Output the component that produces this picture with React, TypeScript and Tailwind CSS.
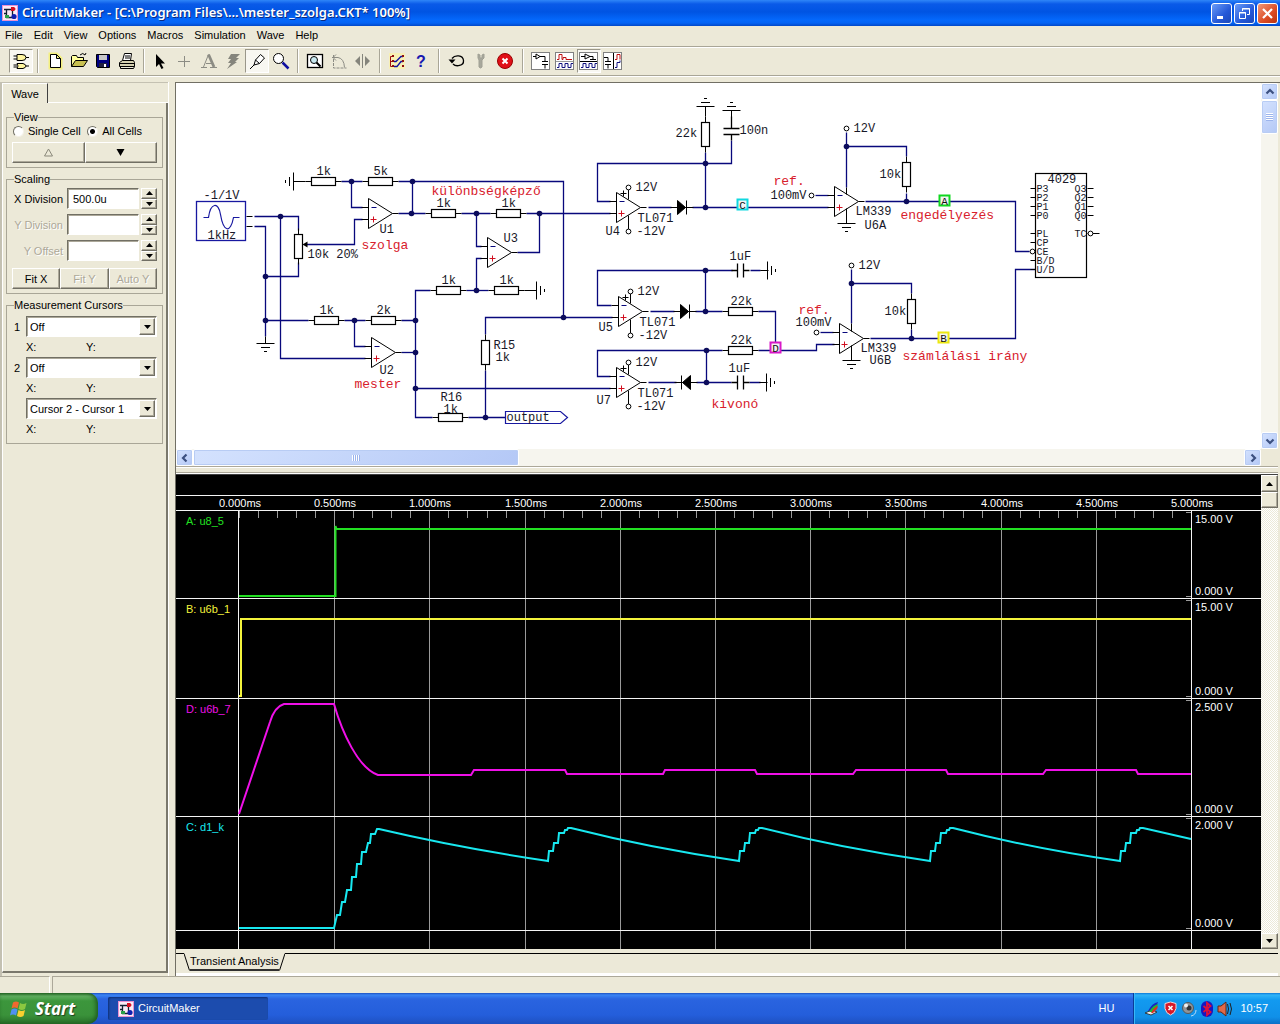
import React, { useState } from "react";

const NAVY = "#08087c";

/* ---------- schematic parts ---------- */

type Pt = { x: number; y: number };

function Wire({ d }: { d: string }) {
  return <path d={d} fill="none" stroke={NAVY} strokeWidth="1.3" />;
}

function Lead({ d }: { d: string }) {
  return <path d={d} fill="none" stroke="#000" strokeWidth="1" />;
}

function Dot({ x, y }: Pt) {
  return <circle cx={x} cy={y} r="2.8" fill="#0c0c5c" />;
}

function ResistorH({ x, y }: Pt) {
  return (
    <g fill="#fff" stroke="#000">
      <path d={`M${x - 6} ${y}h36`} />
      <rect x={x} y={y - 4} width="24" height="8" strokeWidth="1.2" />
    </g>
  );
}

function ResistorV({ x, y }: Pt) {
  return (
    <g fill="#fff" stroke="#000">
      <path d={`M${x} ${y - 6}v36`} />
      <rect x={x - 4} y={y} width="8" height="24" strokeWidth="1.2" />
    </g>
  );
}

function Terminal({ x, y }: Pt) {
  return <circle cx={x} cy={y} r="2.4" fill="#fff" stroke="#000" />;
}

function Ground({ x, y, dir }: Pt & { dir: "down" | "up" | "left" | "right" }) {
  const turn = { down: 0, left: 90, up: 180, right: 270 }[dir];
  return (
    <g transform={`translate(${x} ${y}) rotate(${turn})`} stroke="#000" strokeWidth="1">
      <path d="M-9 0H9M-4.500 4H4.500M-1.500 8H1.500M0 -7V0" />
    </g>
  );
}

function OpAmp({ x, y }: Pt) {
  return (
    <g>
      <path d={`M${x} ${y - 15}L${x + 24} ${y}L${x} ${y + 15}Z`} fill="#fff" stroke="#000" />
      <path d={`M${x - 7} ${y - 6}h7M${x - 7} ${y + 6}h7M${x + 24} ${y}h6`} stroke="#000" />
      <path d={`M${x + 3} ${y - 6}h5`} stroke={NAVY} />
      <path d={`M${x + 2} ${y + 6}h6M${x + 5} ${y + 3}v6`} stroke="#d01020" />
    </g>
  );
}

function Supply({ x, y }: Pt) {
  return (
    <g>
      <path d={`M${x + 12} ${y - 18}v10M${x + 12} ${y + 8}v14M${x + 4} ${y - 14}h6M${x + 7} ${y - 17}v6`} stroke="#000" />
      <Terminal x={x + 12} y={y - 20} />
      <Terminal x={x + 12} y={y + 24} />
      <Label x={x + 19} y={y - 17}>12V</Label>
      <Label x={x + 21} y={y + 14}>TL071</Label>
      <Label x={x + 20} y={y + 27}>-12V</Label>
    </g>
  );
}

function Diode({ x, y, flip }: Pt & { flip?: boolean }) {
  return (
    <g fill="#000" stroke="#000">
      <path d={flip ? `M${x + 9} ${y - 7}v14l-8 -7zM${x} ${y - 7}v14` : `M${x} ${y - 7}v14l8 -7zM${x + 9} ${y - 7}v14`} />
      <path d={`M${x - 7} ${y}h23`} />
    </g>
  );
}

function CapH({ x, y }: Pt) {
  return <path d={`M${x - 6} ${y}h6M${x} ${y - 7}v14M${x + 6} ${y - 7}v14M${x + 6} ${y}h6`} stroke="#000" strokeWidth="1.3" />;
}

function Label({ x, y, children }: Pt & { children: string }) {
  return (
    <text x={x} y={y} fontSize="12" fill="#181828">
      {children}
    </text>
  );
}

function Note({ x, y, children }: Pt & { children: string }) {
  return (
    <text x={x} y={y} fontSize="13" fill="#d8202c">
      {children}
    </text>
  );
}

function Probe({ x, y, name, color }: Pt & { name: string; color: string }) {
  return (
    <g>
      <rect x={x - 5} y={y - 5} width="10" height="10" fill="#f4f4f4" stroke={color} strokeWidth="2" />
      <text x={x} y={y + 4} fontSize="11" textAnchor="middle" fill="#111">
        {name}
      </text>
    </g>
  );
}

const resistorsH = [
  [311, 181], [368, 181], [314, 320], [371, 320], [431, 213], [496, 213], [436, 290],
  [494, 290], [438, 417], [728, 311], [728, 350],
];
const resistorsV = [[298, 234], [485, 340], [705, 122], [906, 162], [911, 299]];
const dots = [
  [280, 216], [265, 276], [265, 320], [351, 181], [412, 181], [411, 213], [354, 320], [415, 320],
  [415, 352], [415, 388], [476, 213], [539, 213], [476, 290], [563, 317], [485, 417], [705, 163],
  [705, 207], [705, 270], [705, 311], [706, 350], [706, 382], [846, 146], [906, 201], [851, 283], [911, 338],
];
const wires = [
  "M254 216H298V230", "M254 226H265V336", "M298 262V276H265", "M280 216V358H365", "M306 244H354V219H362",
  "M341 181H362M398 181H563V317", "M351 181V207H362", "M398 213H425M412 181V213", "M265 320H308",
  "M344 320H365M401 320H415", "M354 320V346H365", "M401 352H415", "M430 290H415V417H432", "M415 388H610",
  "M461 213H490M526 213H610", "M476 213V246H481", "M476 290V258H481", "M517 252H539V213", "M466 290H488",
  "M468 417H505", "M485 370V417M485 334V317H612", "M610 201H597V163H731V140", "M705 152V207",
  "M648 207H671M692 207H828", "M611 305H597V270H732", "M650 311H674M695 311H722M705 270V311",
  "M758 311H775V342", "M610 376H597V350H722", "M758 350H816V344H834", "M648 382H676M696 382H731M706 350V382",
  "M750 270H760M749 382H760", "M815 195H828", "M846 132V187M846 146H906V156", "M906 193V201M865 201H1015V251H1029",
  "M820 332H833", "M851 269V323M851 283H911V293", "M911 329V338M870 338H1015V269H1035",
];
const labels: [number, number, string][] = [
  [203, 198, "-1/1V"], [207, 238, "1kHz"], [316, 174, "1k"], [373, 174, "5k"], [379, 232, "U1"],
  [307, 257, "10k 20%"], [319, 313, "1k"], [376, 313, "2k"], [379, 373, "U2"], [436, 206, "1k"],
  [501, 206, "1k"], [503, 241, "U3"], [441, 283, "1k"], [499, 283, "1k"], [493, 348, "R15"],
  [495, 360, "1k"], [440, 400, "R16"], [443, 412, "1k"], [506, 420, "output"], [605, 234, "U4"],
  [598, 330, "U5"], [596, 403, "U7"], [675, 136, "22k"], [739, 133, "100n"], [729, 259, "1uF"],
  [730, 304, "22k"], [730, 343, "22k"], [728, 371, "1uF"], [770, 198, "100mV"], [853, 131, "12V"],
  [879, 177, "10k"], [855, 214, "LM339"], [864, 228, "U6A"], [795, 325, "100mV"], [858, 268, "12V"],
  [884, 314, "10k"], [860, 351, "LM339"], [869, 363, "U6B"], [1047, 182, "4029"],
];
const notes: [number, number, string][] = [
  [361, 248, "szolga"], [354, 387, "mester"], [431, 194, "különbségképző"], [711, 407, "kivonó"],
  [773, 184, "ref."], [798, 313, "ref."], [900, 218, "engedélyezés"], [902, 359, "számlálási irány"],
];
const leftPins: [number, string][] = [
  [188, "P3"], [197, "P2"], [206, "P1"], [215, "P0"], [233, "PL"], [242, "CP"], [251, "CE"], [260, "B/D"], [269, "U/D"],
];
const rightPins: [number, string][] = [[188, "Q3"], [197, "Q2"], [206, "Q1"], [215, "Q0"], [233, "TC"]];

function Schematic() {
  return (
    <svg width="1085" height="366" viewBox="175.5 82.5 1085 366" className="block max-w-none font-['Liberation_Mono',monospace]">
      {wires.map((d) => <Wire key={d} d={d} />)}
      <rect x="196" y="201" width="49" height="39" fill="none" stroke="#1818a0" strokeWidth="1.300" />
      <path d="M203 217H208C210 202 218 201 220 214C223 232 230 233 233 217H239" fill="none" stroke="#1818a0" strokeWidth="1.200" />
      <Lead d="M246 216h6M246 226h6" />
      {resistorsH.map(([x, y]) => <ResistorH key={`${x}-${y}`} x={x} y={y} />)}
      {resistorsV.map(([x, y]) => <ResistorV key={`${x}-${y}`} x={x} y={y} />)}
      <path d="M302 244l5 -3v6z" fill="#000" />
      <Ground x={265} y={343} dir="down" />
      <Ground x={293} y={181} dir="left" />
      <Lead d="M293 181h12M524 290h12M760 270h8M759 382h8M705 106v10" />
      <Ground x={536} y={290} dir="right" />
      <Ground x={705} y={106} dir="up" />
      <Ground x={731} y={110} dir="up" />
      <Ground x={767} y={270} dir="right" />
      <Ground x={766} y={382} dir="right" />
      <Ground x={846} y={223} dir="down" />
      <Ground x={851} y={360} dir="down" />
      <path d="M723 134h16M723 128h16M731 134v6M731 128v-12" stroke="#000" strokeWidth="1.3" />
      <CapH x={737} y={270} />
      <CapH x={737} y={382} />
      <Diode x={677} y={207} />
      <Diode x={680} y={311} />
      <Diode x={681} y={382} flip />
      <OpAmp x={368} y={213} />
      <OpAmp x={371} y={352} />
      <OpAmp x={487} y={252} />
      <OpAmp x={616} y={207} />
      <OpAmp x={618} y={311} />
      <OpAmp x={616} y={382} />
      <OpAmp x={834} y={201} />
      <OpAmp x={839} y={338} />
      <Supply x={616} y={207} />
      <Supply x={618} y={311} />
      <Supply x={616} y={382} />
      <Lead d="M846 187v7M846 208v15M851 323v8M851 345v15" />
      <Terminal x={846} y={128} />
      <Terminal x={851} y={265} />
      <Terminal x={811} y={195} />
      <Terminal x={816} y={332} />
      <path d="M505 411H560L567 417L560 423H505Z" fill="#fff" stroke="#1818a0" strokeWidth="1.2" />
      <rect x="1035" y="173" width="51" height="104" fill="#fff" stroke="#000" strokeWidth="1.2" />
      {leftPins.map(([y, name]) => (
        <g key={name}>
          <path d={`M1030 ${y}h5`} stroke="#000" />
          <text x="1036" y={y + 3} fontSize="10" fill="#181828">{name}</text>
        </g>
      ))}
      {rightPins.map(([y, name]) => (
        <g key={name}>
          <path d={`M1087 ${y}h${name === "TC" ? 12 : 6}`} stroke="#000" />
          <text x="1086" y={y + 3} fontSize="10" textAnchor="end" fill="#181828">{name}</text>
        </g>
      ))}
      <Terminal x={1032} y={251} />
      <Terminal x={1090} y={233} />
      {dots.map(([x, y]) => <Dot key={`${x}-${y}`} x={x} y={y} />)}
      {labels.map(([x, y, t]) => <Label key={`${x}-${y}`} x={x} y={y}>{t}</Label>)}
      {notes.map(([x, y, t]) => <Note key={`${x}-${y}`} x={x} y={y}>{t}</Note>)}
      <Probe x={742} y={204} name="C" color="#10d8e0" />
      <Probe x={775} y={347} name="D" color="#d818c8" />
      <Probe x={944} y={200} name="A" color="#10d820" />
      <Probe x={943} y={337} name="B" color="#ece810" />
    </svg>
  );
}

/* ---------- waveform plot ---------- */

const gridX = [239, 334, 429, 525, 620, 715, 810, 905, 1001, 1096, 1191];
const times = ["0.000ms", "0.500ms", "1.000ms", "1.500ms", "2.000ms", "2.500ms", "3.000ms", "3.500ms", "4.000ms", "4.500ms", "5.000ms"];
const minorTicks = Array.from({ length: 50 }, (_, i) => Math.round(239 + i * 19.04));

function rise(x: number) {
  return `L${x} 861L${x + 1} 851h4l1 -8h4l1 -10h5l1 -3h2l1 -2h3`;
}

const traces = [
  { id: "A: u8_5", y: 525, color: "#22e022", d: "M239 596H335.500V526L336.500 529H1191" },
  { id: "B: u6b_1", y: 613, color: "#f4f43c", d: "M239 696H241V619H1191" },
  {
    id: "D: u6b_7", y: 713, color: "#f010e8",
    d: "M239 814L270 722C273 712 277 706 284 704H334C342 732 358 768 378 775H471L474 770H565L567 774H663L665 770H755L757 774H853L856 770H946L948 774H1043L1046 770H1136L1138 774H1191",
  },
  {
    id: "C: d1_k", y: 831, color: "#18e8f0",
    d: `M239 928H334L337 915h3l2 -13h3l2 -12h4l1 -13h4l1 -13h4l1 -12h4l2 -9h2l1 -9h4l2 -5H379Q460 848 548 861${rise(548)}Q650 848 739 861${rise(739)}Q840 848 930 861${rise(930)}Q1030 848 1120 861${rise(1120)}L1191 839`,
  },
];
const scales: [number, string][] = [
  [523, "15.00 V"], [595, "0.000 V"], [611, "15.00 V"], [695, "0.000 V"], [711, "2.500 V"], [813, "0.000 V"], [829, "2.000 V"], [927, "0.000 V"],
];

function WavePlot() {
  return (
    <svg viewBox="176 475 1085 474" preserveAspectRatio="xMinYMin meet" className="block h-full w-full font-['Liberation_Sans',Arial,sans-serif]" fontSize="11">
      <g stroke="#9a9a9a" shapeRendering="crispEdges">
        {gridX.slice(1, -1).map((x) => <path key={x} d={`M${x}.5 511V949`} />)}
        {minorTicks.map((x) => <path key={x} d={`M${x}.5 511v7`} />)}
      </g>
      <g stroke="#f4f4f4" shapeRendering="crispEdges">
        {[495, 510, 598, 698, 816, 930].map((y) => <path key={y} d={`M176 ${y}.5H1261`} />)}
        <path d="M238.500 511V949M1191.500 511V949" />
        <path d="M1186 512.500h5M1186 596.500h5M1186 600.500h5M1186 696.500h5M1186 700.500h5M1186 814.500h5M1186 818.500h5M1186 928.500h5" stroke="#9a9a9a" />
      </g>
      {times.map((t, i) => (
        <text key={t} x={gridX[i] + 1} y="507" fill="#fff" textAnchor="middle">{t}</text>
      ))}
      {scales.map(([y, t]) => (
        <text key={y} x="1195" y={y} fill="#fff">{t}</text>
      ))}
      {traces.map((t) => (
        <g key={t.id}>
          <path d={t.d} fill="none" stroke={t.color} strokeWidth="2" />
          <text x="186" y={t.y} fill={t.color}>{t.id}</text>
        </g>
      ))}
    </svg>
  );
}

/* ---------- toolbar ---------- */

function Ico({ children }: { children: React.ReactNode }) {
  return (
    <svg width="20" height="20" viewBox="0 0 20 20" fill="none" stroke="#000" aria-hidden="true">
      {children}
    </svg>
  );
}

function Mode({ children }: { children: React.ReactNode }) {
  return (
    <Ico>
      <rect x="0.5" y="1.500" width="18" height="17" fill="#fff" stroke="#808080" />
      {children}
    </Ico>
  );
}

type Tool = { name: string; icon: React.ReactNode; pressed?: boolean; off?: boolean };

const toolGroups: { gap: "s" | "m"; tools: Tool[] }[] = [
  {
    gap: "s",
    tools: [
      { name: "Parts browser", pressed: true, icon: <Ico><path d="M6 3.500h5q4 0 4 3t-4 3H6zM2.500 5H6M2.500 8H6M15 6.500h3M6 12.500h6q3 1 3 2.500t-3 2.500H6q2-2.500 0-5zM2.500 14H6M2.500 16H6M15 15h3" fill="#fff6a0" /></Ico> },
    ],
  },
  {
    gap: "s",
    tools: [
      { name: "New", icon: <Ico><path d="M5.500 3.500h6l4 4v9h-10z" fill="#fff" stroke="#f4f080" strokeWidth="4" /><path d="M5.500 3.500h6l4 4v9h-10zM11.500 3.500v4h4" fill="#fff" /></Ico> },
      { name: "Open", icon: <Ico><path d="M2.500 15.500v-10l1-1h4l1 2h6v3" fill="#ffff9c" /><path d="M2.500 15.500l4-6h12l-4 6z" fill="#c8c050" /><path d="M11 4q3-3 5 0l1-2" /></Ico> },
      { name: "Save", icon: <Ico><path d="M3.500 3.500h13v13h-12l-1-1z" fill="#000080" /><path d="M6 4h8v5H6z" fill="#c8c8c8" stroke="none" /><path d="M6 12h8v4H6z" fill="#202040" stroke="none" /><path d="M11 13h2v3h-2z" fill="#fff" stroke="none" /></Ico> },
      { name: "Print", icon: <Ico><path d="M5.500 9.500l2-7h7l-1 7z" fill="#fff" /><path d="M8 5h5M8 7h5" /><path d="M2.500 11.500l3-2h11l1 2v4h-15z" fill="#d4d0b0" /><path d="M2.500 12.500h15M3.500 15.500v2h13l1-2" /></Ico> },
    ],
  },
  {
    gap: "s",
    tools: [
      { name: "Arrow", icon: <Ico><path d="M5 3v13l3-3 2.500 5 2-1-2.500-4.500h4z" fill="#000" stroke="none" /></Ico> },
      { name: "Wire", off: true, icon: <Ico><path d="M3 10.500h12M9.500 5v11" stroke="#8c8c84" /></Ico> },
      { name: "Text", off: true, icon: <Ico><path d="M2 16.500h6M11 16.500h7M4.500 16L9.500 3.500M7 12.500h6" stroke="#8c8c84" /><path d="M9.500 3.500L15 16" stroke="#8c8c84" strokeWidth="2.800" /></Ico> },
      { name: "Delete", off: true, icon: <Ico><path d="M8 3h9l-4 4h3l-4 4h2l-10 7 4-6H5l3-4H5z" fill="#85857c" stroke="none" /></Ico> },
      { name: "Probe", pressed: true, icon: <Ico><path d="M3 18l4-4M7 14l1.500-5 5-5.500 4 3.500-5 5.500zM8.500 9l4 3.500" fill="#fff" /></Ico> },
      { name: "Zoom", icon: <Ico><circle cx="7.500" cy="7.500" r="5" fill="#fff" /><path d="M11.500 11.500l6 6" stroke="#1010a0" strokeWidth="2.500" /></Ico> },
    ],
  },
  {
    gap: "s",
    tools: [
      { name: "Fit to window", icon: <Ico><rect x="2.500" y="3.500" width="15" height="13" strokeWidth="1.300" fill="#fff" /><circle cx="9" cy="9" r="3.500" fill="#c8e8f0" /><path d="M11.500 11.500l4 4" strokeWidth="2" /></Ico> },
      { name: "Rotate", off: true, icon: <Ico><path d="M4.500 4v13h13" stroke="#8c8c84" strokeDasharray="3 1" /><path d="M3 6.500h6q6 1 6.500 10M7 3.500L4 6.500l3 3" stroke="#8c8c84" /></Ico> },
      { name: "Mirror", off: true, icon: <Ico><path d="M7 5v10l-5-5zM12 5v10l5-5z" fill="#85857c" stroke="none" /><path d="M9.500 3v14" stroke="#85857c" /></Ico> },
    ],
  },
  {
    gap: "m",
    tools: [
      { name: "Trace wires", icon: <Ico><path d="M2 2h16v16H2z" fill="#f8f0b4" stroke="none" /><path d="M6 5.500H3.500v10H6M3.500 10.500H6" stroke="#a01010" /><path d="M7 10.500h2l5-5h2M7 15.500h3l4-5h2" stroke="#1010a0" strokeWidth="1.300" /><path d="M5 9h2v2H5zM5 14h2v2H5zM15 4h2v2h-2zM15 9h2v2h-2zM15 14h2v2h-2zM5 4h2v2H5z" fill="#901010" stroke="none" /></Ico> },
      { name: "Help", icon: <Ico><text x="10" y="16" fontSize="16" textAnchor="middle" fill="#1818b0" stroke="none" fontFamily="Liberation Sans" fontWeight="bold">?</text></Ico> },
    ],
  },
  {
    gap: "m",
    tools: [
      { name: "Reset", icon: <Ico><path d="M5 7.500C8 3.500 16 4 16.500 9.500S9 16 6 13" strokeWidth="1.300" /><path d="M1.500 8.500h7l-3.500 4z" fill="#000" stroke="none" /></Ico> },
      { name: "Step", off: true, icon: <Ico><path d="M7 3v4l1 2v7q1.500 2 3 0V9l2-2V3l-2 1v3H9V4z" fill="#a8a89c" stroke="#a0a094" /></Ico> },
      { name: "Stop", icon: <Ico><circle cx="10" cy="10" r="7.500" fill="#e01018" stroke="#900" /><path d="M7.500 7.500l5 5M12.500 7.500l-5 5" stroke="#fff" strokeWidth="2" /></Ico> },
    ],
  },
  {
    gap: "s",
    tools: [
      { name: "Schematic view", icon: <Mode><path d="M2 5.500h3M5 3v5l4-2.500zM9 5.500h5v5M11 10.500h6M11 13.500h6M14 13.500v4" /></Mode> },
      { name: "Wave view", icon: <Mode><path d="M2 8.500h2v-5h3v5h1v-2h3v2h6" stroke="#c01010" /><path d="M2 16.500h2v-4h3v4h3v-4h3v4h3v-4h2" stroke="#101080" /><path d="M1 10.500h17" stroke="#999" /></Mode> },
      { name: "Split horizontal", pressed: true, icon: <Mode><path d="M2 5.500h4M6 3v5l5-2.500zM11 5.500h3v3M11 8.500h6M1 10.500h17" /><path d="M2 16.500h2v-4h3v4h3v-4h3v4h3v-4h2" stroke="#101080" /></Mode> },
      { name: "Split vertical", icon: <Mode><path d="M1 6.500h4v4M2 10.500h6M2 13.500h6M5 13.500v4M10.500 2v16" /><path d="M12 8.500h2v-5h3v5" stroke="#c01010" /><path d="M12 16.500h2v-5h3v-2" stroke="#101080" /></Mode> },
    ],
  },
];

function Toolbar() {
  return (
    <div role="toolbar" className="flex h-[30px] shrink-0 items-center border-y border-[#a9a697] pl-[9px] shadow-[inset_0_1px_0_#fff,0_1px_0_#fff]">
      {toolGroups.map((g, i) => (
        <React.Fragment key={i}>
          {g.tools.map((t) => (
            <button
              key={t.name}
              type="button"
              aria-label={t.name}
              disabled={t.off}
              className={
                t.pressed
                  ? "flex h-6 w-6 items-center justify-center border border-t-[#9a978a] border-l-[#9a978a] border-r-white border-b-white bg-[#f8f7f1]"
                  : "flex h-6 w-6 items-center justify-center"
              }
            >
              {t.icon}
            </button>
          ))}
          {i < toolGroups.length - 1 && (
            <span className={g.gap === "m" ? "flex w-3 justify-center" : "flex w-[10px] justify-center"}>
              <span className="h-6 w-[2px] border-l border-[#a9a697] bg-white" />
            </span>
          )}
        </React.Fragment>
      ))}
    </div>
  );
}

function AppIcon() {
  return (
    <svg width="16" height="16" viewBox="0 0 16 16" aria-hidden="true" className="shrink-0">
      <rect width="16" height="16" fill="#fbeaf6" />
      <rect x="0.5" y="0.5" width="15" height="15" fill="none" stroke="#e890d0" />
      <path d="M2 4.500h9M4.500 4v8M10.500 4v6M2 8.500h3M4 12.500h6" stroke="#102030" fill="none" strokeWidth="1.300" />
      <path d="M9 2h3q3 2 0 4H9z" fill="#d81020" />
      <circle cx="12" cy="11.500" r="2.600" fill="#1020b0" />
      <path d="M3 10h4v3H3z" fill="#28a048" />
    </svg>
  );
}

const captionBase =
  "flex h-[21px] w-[21px] items-center justify-center rounded-[3px] border border-white";

function TitleBar() {
  return (
    <header className="flex h-[26px] shrink-0 items-center bg-[linear-gradient(#2f86f8_0,#0a5ae8_4px,#0054e3_12px,#0468fc_20px,#0464f4_23px,#0248c8_26px)] pr-[2px] pl-[2px]">
      <AppIcon />
      <h1 className="ml-1 flex-1 truncate font-['Noto_Sans',sans-serif] text-[13px] font-semibold text-white [text-shadow:1px_1px_0_#0a2a80]">
        CircuitMaker - [C:\Program Files\...\mester_szolga.CKT* 100%]
      </h1>
      <div className="flex gap-[2px]">
        <button type="button" aria-label="Minimize" className={`${captionBase} bg-[linear-gradient(135deg,#6a9cf8,#2458d8_60%,#1c48b8)]`}>
          <svg width="15" height="15" viewBox="0 0 15 15"><path d="M3 11.500h6" stroke="#fff" strokeWidth="3" /></svg>
        </button>
        <button type="button" aria-label="Restore" className={`${captionBase} bg-[linear-gradient(135deg,#6a9cf8,#2458d8_60%,#1c48b8)]`}>
          <svg width="15" height="15" viewBox="0 0 15 15" fill="none" stroke="#fff"><path d="M5.500 5V2.500h7v6H10M5 3h8" /><path d="M2.500 6.500h6v6h-6zM2 7h7" /></svg>
        </button>
        <button type="button" aria-label="Close" className={`${captionBase} bg-[linear-gradient(135deg,#f09878,#dc4c24_60%,#b83410)]`}>
          <svg width="15" height="15" viewBox="0 0 15 15"><path d="M3 3l9 9M12 3l-9 9" stroke="#fff" strokeWidth="2.200" /></svg>
        </button>
      </div>
    </header>
  );
}

function MenuBar() {
  const items = ["File", "Edit", "View", "Options", "Macros", "Simulation", "Wave", "Help"];
  return (
    <nav className="flex h-5 shrink-0 items-center gap-[11px] pb-[2px] pl-[5px] text-[11px]">
      {items.map((m) => (
        <button key={m} type="button">{m}</button>
      ))}
    </nav>
  );
}

/* ---------- side panel ---------- */

const raised =
  "border border-t-white border-l-white border-r-[#716f64] border-b-[#716f64] bg-[#ece9d8] shadow-[inset_-1px_-1px_0_#aca899]";
const sunken = "border border-t-[#716f64] border-l-[#716f64] border-r-white border-b-white bg-white shadow-[inset_1px_1px_0_#aca899]";

function Tri({ down, hollow }: { down?: boolean; hollow?: boolean }) {
  return (
    <svg width="9" height="9" viewBox="0 0 9 9" aria-hidden="true">
      <path d={down ? "M0.500 1h8l-4 7z" : "M0.500 8h8l-4-7z"} fill={hollow ? "none" : "#000"} stroke={hollow ? "#8a887a" : "none"} />
    </svg>
  );
}

function SmallTri({ down }: { down?: boolean }) {
  return (
    <svg width="7" height="4" viewBox="0 0 7 4" aria-hidden="true">
      <path d={down ? "M0 0h7L3.500 4z" : "M0 4h7L3.500 0z"} />
    </svg>
  );
}

function Group({ title, children }: { title: string; children: React.ReactNode }) {
  return (
    <fieldset className="min-w-0 border border-[#a9a697] px-[5px] pb-1">
      <legend className="ml-[2px] h-[14px] leading-[14px]">{title}</legend>
      {children}
    </fieldset>
  );
}

function SpinRow({ id, label, value, off }: { id: string; label: string; value: string; off?: boolean }) {
  const [v, setV] = useState(value);
  return (
    <div className="flex h-[21px] items-center">
      <label htmlFor={id} className={off ? "flex-1 pr-1 text-right text-[#aca899] [text-shadow:1px_1px_0_#fff]" : "flex-1 pr-1 text-right"}>
        {label}
      </label>
      <input id={id} value={v} disabled={off} onChange={(e) => setV(e.target.value)} className={`${sunken} h-[21px] w-[72px] pl-[5px]`} />
      <span className="ml-[2px] flex h-[21px] w-4 flex-col">
        <button type="button" aria-label={`${label} up`} className={`${raised} flex flex-1 items-center justify-center`}><SmallTri /></button>
        <button type="button" aria-label={`${label} down`} className={`${raised} flex flex-1 items-center justify-center`}><SmallTri down /></button>
      </span>
    </div>
  );
}

function CursorPick({ id, label, options }: { id: string; label?: string; options: string[] }) {
  return (
    <div>
      <div className="flex items-center">
        {label ? <label htmlFor={id} className="w-[14px] pl-[2px]">{label}</label> : <span className="w-[14px]" />}
        <span className="relative flex-1">
          <select id={id} aria-label={label ? undefined : "Cursor difference"} className={`${sunken} block h-[21px] w-full appearance-none pl-[3px]`}>
            {options.map((o) => <option key={o}>{o}</option>)}
          </select>
          <span className={`${raised} pointer-events-none absolute top-[2px] right-[2px] bottom-[2px] flex w-4 items-center justify-center`}>
            <SmallTri down />
          </span>
        </span>
      </div>
      <div className="flex h-5 items-center pl-[14px]">
        <span className="w-[60px]">X:</span>
        <span>Y:</span>
      </div>
    </div>
  );
}

function SidePanel() {
  const [cell, setCell] = useState("all");
  const radio =
    "h-[11px] w-[11px] appearance-none rounded-full border border-t-[#716f64] border-l-[#716f64] border-r-[#f4f2e8] border-b-[#f4f2e8] bg-white checked:bg-[radial-gradient(#000_2px,#fff_3px)]";
  return (
    <aside className="flex w-[168px] shrink-0 flex-col border-t border-l-2 border-[#c4c1b2] pb-[3px] text-[11px] leading-[14px]">
      <div role="tablist" className="flex shrink-0">
        <button type="button" role="tab" aria-selected="true" className="h-5 w-[46px] border-t border-r border-l border-t-white border-r-[#404040] border-l-white text-[11px]">
          Wave
        </button>
        <span className="flex-1 border-b border-white" />
      </div>
      <div className="flex flex-1 flex-col border-r-2 border-b-2 border-l border-[#7a786c] border-l-white pt-[7px] pr-[3px] pl-[3px]">
        <div className="flex flex-col gap-1">
          <Group title="View">
            <div className="flex h-[14px] items-center">
              <label className="flex items-center gap-1 pl-[1px]">
                <input type="radio" name="cell" className={radio} checked={cell === "one"} onChange={() => setCell("one")} />
                Single Cell
              </label>
              <label className="flex flex-1 items-center justify-end gap-1 pr-[15px]">
                <input type="radio" name="cell" className={radio} checked={cell === "all"} onChange={() => setCell("all")} />
                All Cells
              </label>
            </div>
            <div className="mt-1 grid h-[21px] grid-cols-2">
              <button type="button" aria-label="Previous" disabled className={`${raised} flex items-center justify-center`}><Tri hollow /></button>
              <button type="button" aria-label="Next" className={`${raised} flex items-center justify-center`}><Tri down /></button>
            </div>
          </Group>
          <Group title="Scaling">
            <div className="flex flex-col gap-[5px] pt-[2px]">
              <SpinRow id="xdiv" label="X Division" value="500.0u" />
              <SpinRow id="ydiv" label="Y Division" value="" off />
              <SpinRow id="yoff" label="Y Offset" value="" off />
            </div>
            <div className="mt-[7px] grid h-[21px] grid-cols-3">
              <button type="button" className={raised}>Fit X</button>
              <button type="button" disabled className={`${raised} text-[#aca899] [text-shadow:1px_1px_0_#fff]`}>Fit Y</button>
              <button type="button" disabled className={`${raised} text-[#aca899] [text-shadow:1px_1px_0_#fff]`}>Auto Y</button>
            </div>
          </Group>
          <Group title="Measurement Cursors">
            <div className="pt-1">
              <CursorPick id="c1" label="1" options={["Off", "A", "B", "C", "D"]} />
              <CursorPick id="c2" label="2" options={["Off", "A", "B", "C", "D"]} />
              <CursorPick id="cd" options={["Cursor 2 - Cursor 1"]} />
            </div>
          </Group>
        </div>
      </div>
    </aside>
  );
}

/* ---------- work area ---------- */

const xpScroll =
  "flex shrink-0 items-center justify-center rounded-[2px] border border-white bg-[linear-gradient(135deg,#d4e2fe,#b4c8f6)] shadow-[inset_0_0_0_1px_#b8ccf4]";

function Chevron({ turn }: { turn: string }) {
  return (
    <svg width="10" height="10" viewBox="0 0 10 10" aria-hidden="true" className={turn}>
      <path d="M1.500 6.500L5 3l3.500 3.500" fill="none" stroke="#3c5080" strokeWidth="2.200" />
    </svg>
  );
}

function WorkArea() {
  return (
    <main className="flex min-w-0 flex-1 flex-col border-t border-l border-[#716f64] pr-[2px]">
      <div className="flex h-[366px] shrink-0">
        <div className="min-w-0 flex-1 overflow-hidden bg-white">
          <Schematic />
        </div>
        <div className="flex w-[17px] flex-col bg-[#f6f5ee]">
          <button type="button" aria-label="Scroll up" className={`${xpScroll} h-[17px]`}><Chevron turn="" /></button>
          <span className={`${xpScroll} h-[34px]`}>
            <span className="h-2 w-[7px] bg-[repeating-linear-gradient(#fff_0,#fff_1px,#9cb4ec_1px,#9cb4ec_2px)]" />
          </span>
          <span className="flex-1" />
          <button type="button" aria-label="Scroll down" className={`${xpScroll} h-[17px]`}><Chevron turn="rotate-180" /></button>
        </div>
      </div>
      <div className="flex h-[17px] shrink-0">
        <div className="flex flex-1 bg-[#f6f5ee]">
          <button type="button" aria-label="Scroll left" className={`${xpScroll} w-[17px]`}><Chevron turn="-rotate-90" /></button>
          <span className={`${xpScroll} w-[30%]`}>
            <span className="h-[6px] w-2 bg-[repeating-linear-gradient(90deg,#fff_0,#fff_1px,#9cb4ec_1px,#9cb4ec_2px)]" />
          </span>
          <span className="flex-1" />
          <button type="button" aria-label="Scroll right" className={`${xpScroll} w-[17px]`}><Chevron turn="rotate-90" /></button>
        </div>
        <span className="w-[17px]" />
      </div>
      <div className="flex h-[9px] shrink-0 flex-col justify-between border-t border-b border-t-[#aca899] border-b-[#404040]">
        <span className="h-[1px] bg-white" />
        <span className="h-[2px] border-t border-[#aca899] bg-white" />
      </div>
      <div className="flex min-h-[200px] flex-1">
        <div className="h-[474px] min-w-0 flex-1 bg-black">
          <WavePlot />
        </div>
        <div className="flex w-[17px] flex-col bg-[repeating-conic-gradient(#fff_0_25%,#ece9d8_0_50%)] bg-[length:2px_2px]">
          <button type="button" aria-label="Plot scroll up" className={`${raised} flex h-[17px] items-center justify-center`}><SmallTri /></button>
          <span className={`${raised} h-4`} />
          <span className="flex-1" />
          <button type="button" aria-label="Plot scroll down" className={`${raised} flex h-4 items-center justify-center`}><SmallTri down /></button>
        </div>
      </div>
      <div className="flex h-[27px] shrink-0 border-b-[3px] border-white pt-1">
        <span className="w-2 border-t border-black" />
        <svg width="6" height="18" viewBox="0 0 6 18" fill="none" stroke="#000"><path d="M0 0.500L5.500 17.500" /></svg>
        <button type="button" className="h-[18px] border-b-2 border-[#303030] text-[11px] leading-[16px]">Transient Analysis</button>
        <svg width="6" height="18" viewBox="0 0 6 18" fill="none" stroke="#000"><path d="M6 0.500L0.500 17.500" /></svg>
        <span className="flex-1 border-t border-black" />
      </div>
    </main>
  );
}

/* ---------- task bar ---------- */

function Taskbar() {
  return (
    <footer className="flex h-[31px] shrink-0 items-stretch bg-[linear-gradient(#1c50c0_0,#3a84f4_2px,#2a64e0_6px,#245edb_22px,#1e50c0_31px)] text-[11px] text-white">
      <button type="button" className="flex w-[98px] items-center gap-[6px] rounded-r-[10px] bg-[linear-gradient(#2c702c_0,#62b062_3px,#3c963c_8px,#3a923a_22px,#28702a_31px)] pl-[10px] shadow-[inset_-2px_0_4px_#1e5a1e]">
        <svg width="19" height="18" viewBox="0 0 19 18" aria-hidden="true">
          <path d="M3 2.500q3-2 6 0l-1.500 6q-3-2-6 0z" fill="#f06830" />
          <path d="M10 3q3 2 6.500 0L15 9q-3 2-6.500 0z" fill="#8cc840" />
          <path d="M1.500 9.500q3-2 6 0L6 15.500q-3-2-6 0z" fill="#5090f0" />
          <path d="M8.500 10q3 2 6.500 0l-1.500 6q-3 2-6.500 0z" fill="#f8d030" />
        </svg>
        <span className="font-['Open_Sans',sans-serif] text-[17px] leading-5 font-bold italic [text-shadow:1px_1px_1px_#204020]">Start</span>
      </button>
      <button type="button" className="my-[4px] ml-[10px] flex w-40 items-center gap-1 rounded-[2px] bg-[#1c4cae] pl-[10px] shadow-[inset_1px_1px_2px_#103078]">
        <AppIcon />
        CircuitMaker
      </button>
      <span className="flex-1" />
      <span className="flex w-[35px] items-center">HU</span>
      <div className="flex items-center gap-[3px] border-l border-[#0a3c98] bg-[linear-gradient(#0c78d8_0,#30b4f8_2px,#129af0_7px,#1090e8_24px,#0c70c8_31px)] pr-3 pl-[10px] shadow-[inset_1px_0_0_#38b8f8]">
        <svg width="16" height="16" viewBox="0 0 16 16" aria-hidden="true">
          <path d="M1 12l7-3 5 2-6 3z" fill="#e8e8e8" stroke="#222" strokeWidth="0.800" />
          <path d="M4 10Q8 2 14 1l-1 3-5 7z" fill="#1828c0" />
          <path d="M5 11Q9 4 14 3l-1 3-4 5z" fill="#20b838" />
          <path d="M7 12q3-6 7-7l-1 3-4 4z" fill="#e03020" />
        </svg>
        <svg width="15" height="15" viewBox="0 0 15 15" aria-hidden="true">
          <path d="M7.500 1l5.500 1.500v5q-1 5-5.500 6.500Q3 12.500 2 7.500v-5z" fill="#d81828" stroke="#f0d8d8" />
          <path d="M5.500 5l4 4M9.500 5l-4 4" stroke="#fff" strokeWidth="1.600" />
        </svg>
        <svg width="16" height="16" viewBox="0 0 16 16" aria-hidden="true">
          <circle cx="7" cy="7" r="5.500" fill="#909498" stroke="#50585c" /><circle cx="8" cy="7" r="2.500" fill="#303438" /><circle cx="5" cy="4.500" r="2" fill="#f0f0f0" />
          <path d="M10 15q5-1 5-6" fill="none" stroke="#b8dcf8" />
        </svg>
        <svg width="14" height="16" viewBox="0 0 14 16" aria-hidden="true">
          <rect x="1" width="12" height="16" rx="6" fill="#1818c0" /><path d="M3.500 5l7 6L7 14V2l3.500 3-7 6" fill="none" stroke="#e01038" strokeWidth="1.800" />
        </svg>
        <svg width="16" height="16" viewBox="0 0 16 16" aria-hidden="true">
          <path d="M1 5h3l5-4v14l-5-4H1z" fill="#e06848" stroke="#602818" /><path d="M10.500 3q2 5 0 10M13 2q3 6 0 12" fill="none" stroke="#202020" />
        </svg>
        <time className="ml-1">10:57</time>
      </div>
    </footer>
  );
}

export default function App() {
  return (
    <div className="flex min-h-screen flex-col bg-[#ece9d8] font-['Liberation_Sans',Arial,sans-serif] text-[11px] text-black">
      <TitleBar />
      <MenuBar />
      <Toolbar />
      <div className="mt-[6px] flex flex-1">
        <SidePanel />
        <div className="w-[7px] shrink-0 border-l border-white" />
        <WorkArea />
      </div>
      <div className="flex h-[17px] shrink-0 gap-[2px]">
        <span className="w-[50px] border-t border-r border-t-[#aca899] border-r-white" />
        <span className="flex-1 border-t border-l border-[#aca899]" />
      </div>
      <Taskbar />
    </div>
  );
}
